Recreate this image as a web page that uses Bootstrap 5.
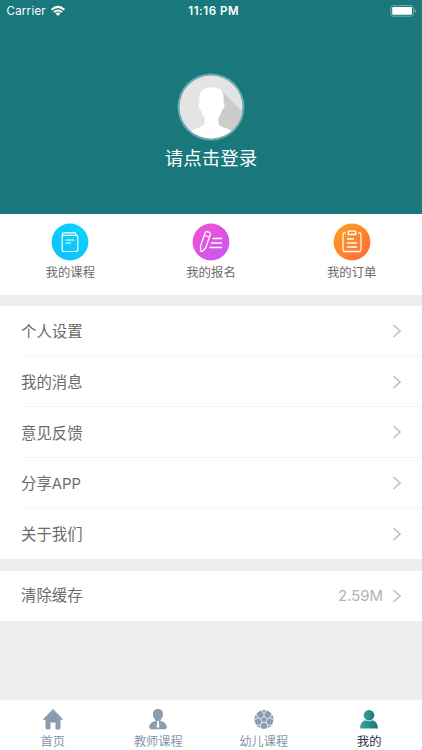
<!DOCTYPE html>
<html lang="zh-CN">
<head>
<meta charset="utf-8">
<meta name="viewport" content="width=device-width, initial-scale=1">
<title>我的</title>
<link href="https://cdn.jsdelivr.net/npm/bootstrap@5.3.0/dist/css/bootstrap.min.css" rel="stylesheet">
<style>
body{font-family:Inter,"Noto Sans CJK SC",sans-serif;background:#eee;color:#6c6c6c;height:750px;overflow:hidden}
svg{display:block;flex:none}
.hero{background:#18787c;height:213.5px;color:#fff}
.status{height:22px;font-size:11.5px;line-height:22px;padding:0 5px 0 6.5px}
.carrier{letter-spacing:.25px}
.status-time{font-weight:600;letter-spacing:.55px;padding-left:4px}
.avatar{margin-top:51px}
.login{font-size:18.5px;line-height:26px;margin-top:4px}
.shortcuts{height:81.5px;padding-top:9.5px}
.shortcut-label{font-size:12.4px;line-height:18px;margin-top:3px}
.menu{margin-top:11px}
.menu-row{height:50.7px;padding-left:21px;font-size:15.4px}
.menu-row > span{padding-top:1px}
.menu-row .latin{font-size:14.8px}
.menu-line{margin-left:20px;margin-top:-1px;height:1px;background:#f4f4f4}
.menu .menu-row svg{margin-bottom:1px}
.menu-row.cache-row{height:50.2px;margin-top:11.5px}
.cache-row > span{padding-top:0}
.menu-row .size{color:#b2b2b2;font-size:14.9px;margin-right:9px}
.chev{margin-right:20px}
.tabs{height:50px;color:#8496a9}
.tab-label{font-size:12.2px;line-height:18px;margin-top:2px}
.tab-on{color:#26323f}
</style>
<script src="https://cdn.jsdelivr.net/npm/bootstrap@5.3.0/dist/js/bootstrap.bundle.min.js"></script>
</head>
<body class="d-flex flex-column">
<header class="hero d-flex flex-column align-items-center">
  <div class="status row g-0 w-100">
    <div class="col d-flex align-items-center"><span class="carrier">Carrier</span>
      <svg class="ms-1" width="16" height="12" viewBox="0 0 16 12" fill="none" stroke="#fff" stroke-width="2"><path d="M1.600 4.700Q8-1 14.400 4.700M4 7.200Q8 3.700 12 7.200"/><path d="M5.600 8.500Q8 6.700 10.400 8.500L8 11Z" fill="#fff" stroke="none"/></svg>
    </div>
    <div class="col-auto status-time">11:16 PM</div>
    <div class="col d-flex align-items-center justify-content-end">
      <svg width="27" height="12" viewBox="0 0 27 12"><rect x=".8" y=".6" width="22.600" height="10.600" rx="2.600" fill="none" stroke="#74adb0"/><rect x="2.200" y="2" width="19.800" height="7.800" rx="1.300" fill="#fff"/><path d="M24.700 4v4q1.500-.6 1.500-2t-1.500-2" fill="#74adb0"/></svg>
    </div>
  </div>
  <svg class="avatar" width="68" height="68" viewBox="0 0 68 68">
    <defs><clipPath id="face"><circle cx="34" cy="34" r="31.500"/></clipPath></defs>
    <circle cx="34" cy="34" r="33.500" fill="#68a9ac"/>
    <g clip-path="url(#face)"><path fill="#e4e4e4" d="M0 0h68v68H0z"/><path fill="#ccc" d="M45 18 68 41v27H48L38 48Z"/>
    <path fill="#fff" d="M22.500 29.500V24C22.500 17 27 14.500 34.500 14.500S46.500 17 46.500 24v5.500q1.400.6.800 4-.5 3.300-2.300 3.500-.8 4.500-3.500 7.500v6q1 2.500 5.500 4 8 2.200 11 6.500v7H11v-7q3-4.300 11-6.500 4.500-1.500 5.500-4v-6q-2.700-3-3.500-7.500-1.800-.2-2.300-3.500-.6-3.400.8-4Z"/></g>
  </svg>
  <div class="login">请点击登录</div>
</header>

<section class="shortcuts bg-white row g-0 text-center">
  <div class="col d-flex flex-column align-items-center">
    <svg width="38" height="38" viewBox="0 0 38 38" fill="none" stroke="#fff" stroke-width="1.200" stroke-linecap="round" stroke-linejoin="round">
      <defs><linearGradient id="blue" x1="0" y1="1" x2="1" y2="0"><stop stop-color="#12c0fa"/><stop offset="1" stop-color="#08d4fd"/></linearGradient></defs>
      <circle cx="19" cy="19" r="18.400" fill="url(#blue)" stroke="none"/>
      <path d="M11.200 12v15q0 1.500 1.500 1.500h12.600q1.500 0 1.500-1.500V13.800q0-1.400-1.500-1.400H12.700q-1.500 0-1.500-1.200t1.500-1.400h10.800q1.500 0 1.500 1.400v1.200M15 17h8M15 20h4.500"/>
    </svg><div class="shortcut-label">我的课程</div>
  </div>
  <div class="col d-flex flex-column align-items-center">
    <svg width="38" height="38" viewBox="0 0 38 38" fill="none" stroke="#fff" stroke-width="1.300" stroke-linecap="round" stroke-linejoin="round">
      <defs><linearGradient id="pink" x1="0" y1="0" x2="1" y2="1"><stop stop-color="#f452cd"/><stop offset="1" stop-color="#ca56f8"/></linearGradient></defs>
      <circle cx="19" cy="19" r="18.400" fill="url(#pink)" stroke="none"/>
      <path d="M13 10.200q.5-1.900 2.200-1.500l2 .6q1.600.6 1.100 2.300l-4.600 13.400-3.300 3.300q-1.300.6-1.700-.8L8.500 23ZM12.500 12.500l4.800 1.500M21 15.500h8.500M19.500 20h10M18 24.500h11.500"/>
    </svg><div class="shortcut-label">我的报名</div>
  </div>
  <div class="col d-flex flex-column align-items-center">
    <svg width="38" height="38" viewBox="0 0 38 38" fill="none" stroke="#fff" stroke-width="1.300" stroke-linecap="round" stroke-linejoin="round">
      <defs><linearGradient id="orange" x1="0" y1="0" x2="1" y2="1"><stop stop-color="#ffa021"/><stop offset="1" stop-color="#ff6a34"/></linearGradient></defs>
      <circle cx="19" cy="19" r="18.400" fill="url(#orange)" stroke="none"/>
      <path d="M12.500 9.800H11.500q-1.500 0-1.500 1.500v15.700q0 1.500 1.500 1.500h15q1.500 0 1.500-1.500V11.300q0-1.500-1.500-1.500h-1M15.300 8.200h7.400v3.300h-7.400ZM14.500 16h6M14.500 20h9M14.500 24h9"/>
    </svg><div class="shortcut-label">我的订单</div>
  </div>
</section>

<svg width="0" height="0" class="position-absolute"><symbol id="chev" viewBox="0 0 10 14"><path d="M1.500 1 8 7l-6.500 6" fill="none" stroke="#c3c3c7" stroke-width="1.700"/></symbol></svg>
<section class="menu bg-white">
  <div class="menu-row d-flex align-items-center"><span class="flex-grow-1">个人设置</span><svg class="chev" width="10" height="14"><use href="#chev"/></svg></div><div class="menu-line"></div>
  <div class="menu-row d-flex align-items-center"><span class="flex-grow-1">我的消息</span><svg class="chev" width="10" height="14"><use href="#chev"/></svg></div><div class="menu-line"></div>
  <div class="menu-row d-flex align-items-center"><span class="flex-grow-1">意见反馈</span><svg class="chev" width="10" height="14"><use href="#chev"/></svg></div><div class="menu-line"></div>
  <div class="menu-row d-flex align-items-center"><span class="flex-grow-1">分享<span class="latin">APP</span></span><svg class="chev" width="10" height="14"><use href="#chev"/></svg></div><div class="menu-line"></div>
  <div class="menu-row d-flex align-items-center"><span class="flex-grow-1">关于我们</span><svg class="chev" width="10" height="14"><use href="#chev"/></svg></div>
</section>
<section class="menu-row cache-row bg-white d-flex align-items-center"><span class="flex-grow-1">清除缓存</span><span class="size">2.59M</span><svg class="chev" width="10" height="14"><use href="#chev"/></svg></section>

<nav class="tabs bg-white row g-0 mt-auto">
  <div class="col d-flex flex-column align-items-center pt-2">
    <svg width="22" height="23" viewBox="0 0 22 23"><path fill="#8a9caf" stroke="#8a9caf" stroke-linejoin="round" d="M11 1.500 20.500 11.300H18V20q0 1-1 1h-3v-7H8v7H5q-1 0-1-1v-8.700H1.500Z"/></svg>
    <div class="tab-label">首页</div>
  </div>
  <div class="col d-flex flex-column align-items-center pt-2">
    <svg width="22" height="23" viewBox="0 0 22 23"><path fill="#8a9caf" d="M11 1c3.500 0 5.300 2.300 5 5.500-.2 2.500-1.200 4.300-2.500 5.500v1q6 1.300 6.300 6 0 2.300-3.500 2.300H5.700q-3.500 0-3.500-2.300.3-4.700 6.300-6v-1C7.200 10.800 6.200 9 6 6.500 5.700 3.300 7.500 1 11 1Z"/><path fill="#fff" d="M9.800 13h2.400l-.5 1.600.8 4.200-1.500 1.400-1.500-1.400.8-4.200Z"/></svg>
    <div class="tab-label">教师课程</div>
  </div>
  <div class="col d-flex flex-column align-items-center pt-2">
    <svg width="22" height="23" viewBox="0 0 22 23"><circle cx="11" cy="11.500" r="9.500" fill="#8a9caf"/><g fill="none" stroke="#fff" stroke-width=".8"><path d="m11 8.500 3.200 2.300-1.200 3.700H9l-1.200-3.700ZM11 8.500V5.500L8 2M11 5.500 14 2M7.800 10.800 5 9.700 3 6M5 9.700 1.500 12M14.200 10.800 17 9.700 19 6M17 9.700l3.500 2.300M9 14.500l-1.800 2.700-4-.2M7.200 17.200 8 21M13 14.500l1.800 2.700 4-.2M14.800 17.200 14 21"/></g></svg>
    <div class="tab-label">幼儿课程</div>
  </div>
  <div class="col tab-on d-flex flex-column align-items-center pt-2">
    <svg width="22" height="23" viewBox="0 0 22 23"><defs><linearGradient id="teal"><stop stop-color="#40a09c"/><stop offset="1" stop-color="#18787c"/></linearGradient></defs><g fill="url(#teal)"><circle cx="11" cy="7.200" r="5.300"/><path d="M2 20.500Q2.200 13.500 7.500 12.300q3.500 2 7 0 5.300 1.200 5.500 8.200Z"/></g></svg>
    <div class="tab-label">我的</div>
  </div>
</nav>
</body>
</html>
